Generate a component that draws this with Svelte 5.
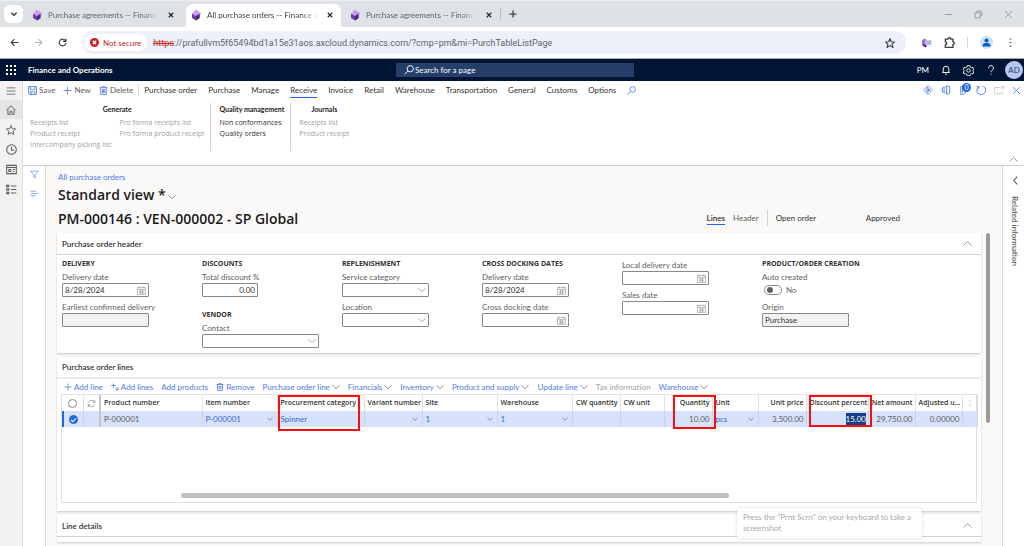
<script>
  // stroke icons on a 16x16 grid
  const icons = {
    down: 'M1 4.500l7 7 7-7',
    up: 'M1 11.500l7-7 7 7',
    left: 'M11 1L5 8l6 7',
    close: 'M2 2l12 12M14 2L2 14',
    plus: 'M8 1v14M1 8h14',
    minimize: 'M2 8h12',
    restore: 'M2 5h9v9H2zM5 5V4a2 2 0 0 1 2-2h5a2 2 0 0 1 2 2v5a2 2 0 0 1-2 2h-1',
    back: 'M15 8H2M8 2L2 8l6 6',
    forward: 'M1 8h13M8 2l6 6-6 6',
    reload: 'M13.500 5.500A6 6 0 1 0 14 9M14 1v5H9',
    star: 'M8 1l2.100 4.900 5.300.4-4 3.500 1.200 5.200L8 12.200 3.400 15l1.200-5.200-4-3.500 5.300-.4z',
    puzzle: 'M2 3h4a2 2 0 0 1 4 0h3v4a2 2 0 0 1 0 4v4H2v-4a2 2 0 0 0 0-4z',
    search: 'M10 1a5 5 0 1 1 0 10 5 5 0 0 1 0-10M6.300 9.500L1 15',
    bell: 'M2 12h12M3.500 12V6.500a4.500 4.500 0 0 1 9 0V12M6.500 14.500h3',
    gear: 'M6 1h4l.5 2 2 1 2-.5 1 3.500-1.500 1.500L15.500 10l-1 3-2-.5-2 1-.5 2H6l-.5-2-2-1-2 .5-1-3L2 8.500.500 7l1-3.500 2 .5 2-1zM8 5.500a2.500 2.500 0 1 0 0 5 2.500 2.500 0 0 0 0-5',
    help: 'M4 5a4 4 0 1 1 6 3.500c-1.500 1-2 1.500-2 3M8 14v1.500',
    menu: 'M1 3h14M1 8h14M1 13h14',
    home: 'M1 8l7-6.500L15 8M3 6.500V15h3.500v-5h3v5H13V6.500',
    clock: 'M8 1a7 7 0 1 0 0 14A7 7 0 0 0 8 1M8 4v5h4',
    workspace: 'M1 2h14v12H1zM1 5h14M4 8h3v3H4zM10 8h3M10 11h2',
    modules: 'M1 2h3v2H1zM1 7h3v2H1zM1 12h3v2H1zM7 3h8M7 8h8M7 13h8',
    save: 'M1 1h14v14H3l-2-2zM4 1v5h8V1M4 15v-5h8v5M6.500 12v3',
    trash: 'M1 3h14M5.500 3V1h5v2M3 3v12h10V3M6 5.500v7M8 5.500v7M10 5.500v7',
    funnel: 'M1 2h14l-5.500 6v6l-3-2V8z',
    lines: 'M1 4h9M1 8h14M1 12h9',
    calendar: 'M1 2.500h14V15H1zM1 6h14M4 1v3M12 1v3M4 9h8M4 12h8M6 7v7M10 7v7',
    addlines: 'M5 1v9M0 5h10M9 12h7M12 8v8',
    attach: 'M8 1l7 7-7 7-7-7zM6 3l5 5-5 5M11 8L6 6v4z',
    office: 'M7 3L2 5v6l5 2M5 5v6M9 1l5 2v10l-5 2z',
    clip: 'M3 1h8v11l-3 3H3zM6 4v8',
    refresh: 'M4.500 2.500A7 7 0 1 0 11.500 2M4.500 6V2.500H1',
    popout: 'M9 4H1v10h12V9M10 2h5v5M15 2l-4 4',
    sync: 'M2 6.500A6.500 6.500 0 0 1 14 6M14 9.500A6.500 6.500 0 0 1 2 10M14 2v4h-4M2 14v-4h4',
    more: 'M8 2v1.500M8 7.300v1.500M8 12.500v1.500'
  };

  const tabs = [
    { title: 'Purchase agreements -- Financ' },
    { title: 'All purchase orders -- Finance a', active: true },
    { title: 'Purchase agreements -- Financ' }
  ];

  const menus = [
    'Purchase order', 'Purchase', 'Manage', 'Receive', 'Invoice', 'Retail',
    'Warehouse', 'Transportation', 'General', 'Customs', 'Options'
  ];

  const groups = [
    {
      title: 'Generate',
      disabled: true,
      columns: [
        ['Receipts list', 'Product receipt', 'Intercompany picking list'],
        ['Pro forma receipts list', 'Pro forma product receipt']
      ]
    },
    { title: 'Quality management', columns: [['Non conformances', 'Quality orders']] },
    { title: 'Journals', disabled: true, columns: [['Receipts list', 'Product receipt']] }
  ];

  const lineActions = [
    { label: 'Add line', icon: 'plus' },
    { label: 'Add lines', icon: 'addlines' },
    { label: 'Add products' },
    { label: 'Remove', icon: 'trash' },
    { label: 'Purchase order line', menu: true },
    { label: 'Financials', menu: true },
    { label: 'Inventory', menu: true },
    { label: 'Product and supply', menu: true },
    { label: 'Update line', menu: true },
    { label: 'Tax information', disabled: true },
    { label: 'Warehouse', menu: true }
  ];

  const columns = [
    { label: 'Product number', value: 'P-000001', width: 102, plain: true },
    { label: 'Item number', value: 'P-000001', width: 75, lookup: true },
    { label: 'Procurement category', value: 'Spinner', width: 87, mark: 'category' },
    { label: 'Variant number', value: '', width: 58, lookup: true },
    { label: 'Site', value: '1', width: 75, lookup: true },
    { label: 'Warehouse', value: '1', width: 75, lookup: true },
    { label: 'CW quantity', value: '', width: 48, right: true },
    { label: 'CW unit', value: '', width: 44 },
    { label: 'Quantity', value: '10.00', width: 48, right: true, mark: 'quantity' },
    { label: 'Unit', value: 'pcs', width: 46, lookup: true },
    { label: 'Unit price', value: '3,500.00', width: 48, right: true },
    { label: 'Discount percent', value: '15.00', width: 62, right: true, edit: true, mark: 'discount' },
    { label: 'Net amount', value: '29,750.00', width: 47, right: true },
    { label: 'Adjusted u...', value: '0.00000', width: 47, right: true }
  ];

  let activeMenu = $state('Receive');
  let autoCreated = $state(false);
  let selected = $state(true);
</script>

{#snippet icon(name, size = 10, stroke = 1.5)}
  <svg class="icon" width={size} height={size} viewBox="0 0 16 16" stroke-width={stroke} aria-hidden="true">
    <path d={icons[name]} />
  </svg>
{/snippet}

{#snippet favicon()}
  <svg width="11" height="12" viewBox="0 0 22 24" aria-hidden="true">
    <path d="M9 1l8 5-7 9-8-5z" fill="#e3a7f5" />
    <path d="M9 1l12 8-7 5-8-5z" fill="#c99af0" />
    <path d="M2 9l8 5 7-4v8l-7 5-8-5z" fill="#6b3fa8" />
    <path d="M10 14l7-4v8l-7 5z" fill="#4b2a86" />
  </svg>
{/snippet}

{#snippet dateField(id, label, value = '')}
  <div class="field">
    <label for={id}>{label}</label>
    <div class="box">
      <input {id} type="text" {value} />
      {@render icon('calendar', 9, 1)}
    </div>
  </div>
{/snippet}

{#snippet selectField(id, label, wide = false)}
  <div class="field">
    <label for={id}>{label}</label>
    <div class="box" class:wide>
      <select {id}><option value=""></option></select>
      {@render icon('down', 8)}
    </div>
  </div>
{/snippet}

<div class="window">
  <div class="tabstrip">
    <button class="tab-search" aria-label="Search tabs">{@render icon('down', 6, 3.5)}</button>
    {#each tabs as tab}
      <div class="tab" class:active={tab.active}>
        {@render favicon()}
        <button class="tab-title">{tab.title}</button>
        <button class="tab-close" aria-label="Close tab">{@render icon('close', 6, 3)}</button>
      </div>
    {/each}
    <button class="new-tab" aria-label="New tab">{@render icon('plus', 8, 2.5)}</button>
    <div class="window-controls">
      <button aria-label="Minimize">{@render icon('minimize', 9)}</button>
      <button aria-label="Restore">{@render icon('restore', 9)}</button>
      <button aria-label="Close">{@render icon('close', 9)}</button>
    </div>
  </div>

  <div class="browser-bar">
    <button aria-label="Back">{@render icon('back', 9, 2)}</button>
    <button class="faded" aria-label="Forward">{@render icon('forward', 9, 2)}</button>
    <button aria-label="Reload">{@render icon('reload', 9, 2)}</button>
    <div class="address">
      <button class="insecure">
        <svg width="9" height="9" viewBox="0 0 16 16" aria-hidden="true">
          <circle cx="8" cy="8" r="8" fill="#c5221f" />
          <path d="M5 5l6 6M11 5l-6 6" stroke="#fff" stroke-width="2.5" />
        </svg>
        Not secure
      </button>
      <div class="url">
        <span class="scheme">https</span>
        <input
          type="text"
          aria-label="Address"
          value="://prafullvm5f65494bd1a15e31aos.axcloud.dynamics.com/?cmp=pm&mi=PurchTableListPage"
        />
      </div>
      <button aria-label="Bookmark">{@render icon('star', 10, 1.8)}</button>
    </div>
    <div class="browser-tools">
      <button aria-label="Extension">
        <svg width="11" height="11" viewBox="0 0 22 22" aria-hidden="true">
          <path d="M6 3l6 3-4 5 5 4-3 5-8-5V7z" fill="#9a6bd0" />
          <path d="M3 14l9 4-3 3-6-4z" fill="#4b2a86" />
          <path d="M9 6h12v11H11z" fill="#c9d3e6" />
          <path d="M11 9h9M12 13h8" stroke="#8796b5" stroke-width="1.5" />
        </svg>
      </button>
      <button aria-label="Extensions">{@render icon('puzzle', 11, 2)}</button>
      <span class="bar-divider"></span>
      <button class="profile" aria-label="Profile">
        <svg width="9" height="9" viewBox="0 0 16 16" aria-hidden="true">
          <circle cx="8" cy="4.500" r="3.500" fill="#0b57d0" />
          <path d="M1 15v-2c0-3 4-4 7-4s7 1 7 4v2z" fill="#0b57d0" />
        </svg>
      </button>
      <button aria-label="Browser menu">{@render icon('more', 11, 2.5)}</button>
    </div>
  </div>

  <header class="navbar">
    <div class="brand">
      <button aria-label="Apps">
        <svg width="10" height="10" viewBox="0 0 10 10" fill="#fff" aria-hidden="true">
          {#each [0, 4, 8] as y}
            {#each [0, 4, 8] as x}
              <rect {x} {y} width="2" height="2" />
            {/each}
          {/each}
        </svg>
      </button>
      <strong>Finance and Operations</strong>
    </div>
    <div class="page-search">
      {@render icon('search', 10)}
      <input type="search" aria-label="Search for a page" placeholder="Search for a page" />
    </div>
    <div class="nav-tools">
      <button>PM</button>
      <button aria-label="Notifications">{@render icon('bell', 10)}</button>
      <button aria-label="Settings">{@render icon('gear', 11, 1.3)}</button>
      <button aria-label="Help">{@render icon('help', 10)}</button>
      <button class="avatar">AD</button>
    </div>
  </header>

  <div class="shell">
    <nav class="rail">
      <button aria-label="Expand">{@render icon('menu', 10, 1.3)}</button>
      <ul>
        <li class="current"><a href="#home" aria-label="Home">{@render icon('home', 10)}</a></li>
        <li><a href="#favorites" aria-label="Favorites">{@render icon('star', 10)}</a></li>
        <li><a href="#recent" aria-label="Recent">{@render icon('clock', 11)}</a></li>
        <li><a href="#workspaces" aria-label="Workspaces">{@render icon('workspace', 11)}</a></li>
        <li><a href="#modules" aria-label="Modules">{@render icon('modules', 11)}</a></li>
      </ul>
    </nav>

    <div class="workspace">
      <section class="action-pane">
        <div class="menu-row">
          <div class="commands">
            <button>{@render icon('save', 9)}Save</button>
            <button>{@render icon('plus', 9)}New</button>
            <button>{@render icon('trash', 9)}Delete</button>
          </div>
          <div class="menus">
            {#each menus as menu}
              <button class:active={menu === activeMenu} onclick={() => (activeMenu = menu)}>{menu}</button>
            {/each}
            <button class="blue" aria-label="Search actions">{@render icon('search', 9)}</button>
          </div>
          <div class="page-tools">
            <button aria-label="Power Apps">{@render icon('attach', 10, 1.3)}</button>
            <button aria-label="Office">{@render icon('office', 10)}</button>
            <button class="attachments" aria-label="Attachments">
              {@render icon('clip', 9)}
              <span class="badge">0</span>
            </button>
            <button aria-label="Refresh">{@render icon('refresh', 10)}</button>
            <button class="faded" aria-label="Open in new window">{@render icon('popout', 10, 1.3)}</button>
            <button aria-label="Close page">{@render icon('close', 9)}</button>
          </div>
        </div>
        <div class="groups">
          {#each groups as group}
            <div class="group">
              <h2>{group.title}</h2>
              <div class="group-columns">
                {#each group.columns as items}
                  <ul>
                    {#each items as item}
                      <li><button disabled={group.disabled}>{item}</button></li>
                    {/each}
                  </ul>
                {/each}
              </div>
            </div>
          {/each}
        </div>
        <button class="collapse" aria-label="Collapse">{@render icon('up', 9)}</button>
      </section>

      <div class="body">
        <div class="filter-rail">
          <button aria-label="Filter">{@render icon('funnel', 9)}</button>
          <button aria-label="List">{@render icon('lines', 9)}</button>
        </div>

        <main>
          <div class="content">
            <div class="page-header">
              <div class="titles">
                <a href="#orders">All purchase orders</a>
                <button class="view">Standard view * {@render icon('down', 8)}</button>
                <h1>PM-000146 : VEN-000002 - SP Global</h1>
              </div>
              <div class="status">
                <button class="switch active">Lines</button>
                <button class="switch">Header</button>
                <span class="state">Open order</span>
                <span class="approval">Approved</span>
              </div>
            </div>

            <section class="card">
              <div class="card-head">
                <h2>Purchase order header</h2>
                <button aria-label="Collapse section">{@render icon('up', 9)}</button>
              </div>
              <div class="fields">
                <div>
                  <h3>Delivery</h3>
                  {@render dateField('delivery', 'Delivery date', '8/28/2024')}
                  <div class="field">
                    <label for="confirmed">Earliest confirmed delivery</label>
                    <div class="box locked"><input id="confirmed" type="text" readonly /></div>
                  </div>
                </div>
                <div>
                  <h3>Discounts</h3>
                  <div class="field">
                    <label for="discount">Total discount %</label>
                    <div class="box narrow"><input id="discount" class="number" type="text" value="0.00" /></div>
                  </div>
                  <h3 class="second">Vendor</h3>
                  {@render selectField('contact', 'Contact', true)}
                </div>
                <div>
                  <h3>Replenishment</h3>
                  {@render selectField('service', 'Service category')}
                  {@render selectField('location', 'Location')}
                </div>
                <div>
                  <h3>Cross docking dates</h3>
                  {@render dateField('dock-delivery', 'Delivery date', '8/28/2024')}
                  {@render dateField('dock-date', 'Cross docking date')}
                </div>
                <div class="untitled">
                  {@render dateField('local-date', 'Local delivery date')}
                  {@render dateField('sales-date', 'Sales date')}
                </div>
                <div>
                  <h3>Product/order creation</h3>
                  <div class="field">
                    <label for="auto">Auto created</label>
                    <div class="toggle">
                      <input id="auto" type="checkbox" bind:checked={autoCreated} />
                      <span>{autoCreated ? 'Yes' : 'No'}</span>
                    </div>
                  </div>
                  <div class="field">
                    <label for="origin">Origin</label>
                    <div class="box locked"><input id="origin" type="text" value="Purchase" readonly /></div>
                  </div>
                </div>
              </div>
            </section>

            <section class="card">
              <div class="card-head thick"><h2>Purchase order lines</h2></div>
              <div class="line-actions">
                {#each lineActions as action}
                  <button disabled={action.disabled}>
                    {#if action.icon}{@render icon(action.icon, 8)}{/if}
                    {action.label}
                    {#if action.menu}<span class="caret">{@render icon('down', 8)}</span>{/if}
                  </button>
                {/each}
              </div>
              <div class="grid">
                <table>
                  <colgroup>
                    <col style:width="20px" />
                    <col style:width="17px" />
                    {#each columns as column}
                      <col style:width="{column.width}px" />
                    {/each}
                    <col style:width="15px" />
                  </colgroup>
                  <thead>
                    <tr>
                      <th class="pick"><input type="checkbox" aria-label="Select all" /></th>
                      <th class="pick frozen">{@render icon('sync', 9, 1.3)}</th>
                      {#each columns as column}
                        <th class:right={column.right}>
                          {column.label}
                          {#if column.mark}<span class="mark {column.mark}"></span>{/if}
                        </th>
                      {/each}
                      <th class="pick">{@render icon('more', 8, 2)}</th>
                    </tr>
                  </thead>
                  <tbody>
                    <tr>
                      <td class="pick first">
                        <input type="checkbox" aria-label="Select row" bind:checked={selected} />
                      </td>
                      <td class="frozen"></td>
                      {#each columns as column}
                        <td class:right={column.right} class:plain={column.plain || column.right}>
                          {#if column.edit}
                            <input class="edit" type="text" aria-label={column.label} value={column.value} />
                          {:else if column.lookup}
                            <div class="lookup"><span>{column.value}</span>{@render icon('down', 6, 2)}</div>
                          {:else}
                            {column.value}
                          {/if}
                        </td>
                      {/each}
                      <td></td>
                    </tr>
                  </tbody>
                </table>
                <div class="scroll-x"></div>
              </div>
            </section>

            <section class="card last">
              <div class="card-head">
                <h2>Line details</h2>
                <button aria-label="Expand section">{@render icon('up', 9)}</button>
              </div>
              <div class="toast">Press the "Prnt Scrn" on your keyboard to take a screenshot</div>
            </section>
          </div>
          <div class="scroll-y"></div>
        </main>

        <aside>
          <button aria-label="Open related information">{@render icon('left', 9, 2)}</button>
          <span>Related information</span>
        </aside>
      </div>
    </div>
  </div>
</div>

<style>
  :global(body) {
    margin: 0;
    background: #fff;
  }

  .window {
    display: flex;
    flex-direction: column;
    min-height: 100vh;
    box-sizing: border-box;
    border-bottom: 1px solid #d2d4d8;
    font: 8px/12px Lato, 'Noto Sans', sans-serif;
    color: #323130;
  }

  .window :global(*) {
    box-sizing: border-box;
  }

  button,
  input,
  select {
    font: inherit;
    color: inherit;
    border: 0;
    padding: 0;
    margin: 0;
    background: none;
    outline: 0;
    min-width: 0;
  }

  button {
    display: flex;
    align-items: center;
    white-space: nowrap;
  }

  select {
    appearance: none;
  }

  a {
    color: #4f7be0;
    text-decoration: none;
  }

  h1,
  h2,
  h3,
  ul {
    margin: 0;
    padding: 0;
    list-style: none;
    font-size: 8px;
    font-weight: 600;
  }

  .icon {
    flex: none;
    display: block;
    fill: none;
    stroke: currentColor;
  }

  /* browser chrome */
  .tabstrip {
    display: flex;
    align-items: center;
    height: 27px;
    padding-left: 4px;
    background: #dee1e6;
    border-top: 1px solid #eceef1;
  }

  .tab-search {
    justify-content: center;
    width: 19px;
    height: 18px;
    margin-right: 4px;
    border-radius: 6px;
    background: #fff;
  }

  .tab {
    display: flex;
    align-items: center;
    gap: 5px;
    align-self: flex-end;
    width: 155px;
    height: 23px;
    margin-right: 4px;
    padding: 0 8px 2px 5px;
    border-radius: 7px 7px 0 0;
    color: #5f6368;
  }

  .tab.active {
    background: #fff;
    color: #3c4043;
  }

  .tab-title {
    flex: 1;
    overflow: hidden;
    mask-image: linear-gradient(to right, #000 85%, transparent);
  }

  .tab-close {
    margin-left: 4px;
    color: #202124;
  }

  .new-tab {
    height: 12px;
    margin-left: -4px;
    padding-left: 8px;
    border-left: 1px solid #b9bcc1;
    color: #3c4043;
  }

  .window-controls {
    display: flex;
    gap: 21px;
    margin-left: auto;
    padding-right: 11px;
    color: #8d9095;
  }

  .browser-bar {
    display: flex;
    align-items: center;
    gap: 15px;
    height: 32px;
    padding: 0 8px 0 10px;
    border-bottom: 1px solid #a5a8ac;
    color: #3c4043;
  }

  .faded {
    color: #b8b8b8;
  }

  .address {
    flex: 1;
    display: flex;
    align-items: center;
    height: 23px;
    padding: 0 11px 0 2px;
    border-radius: 12px;
    background: #ecf0f9;
  }

  .insecure {
    gap: 4px;
    height: 17px;
    padding: 0 6px;
    border-radius: 9px;
    background: #fff;
    color: #c5221f;
  }

  .url {
    flex: 1;
    display: flex;
    padding-left: 6px;
    font-family: Roboto, 'Noto Sans', sans-serif;
    font-size: 9px;
    color: #5f6368;
  }

  .url input {
    flex: 1;
  }

  .scheme {
    color: #c5221f;
    text-decoration: line-through;
  }

  .browser-tools {
    display: flex;
    align-items: center;
    gap: 12px;
  }

  .bar-divider {
    width: 1px;
    height: 11px;
    background: #c8d9f4;
  }

  .profile {
    justify-content: center;
    width: 13px;
    height: 13px;
    border-radius: 50%;
    background: #cfe0fc;
  }

  /* application bar */
  .navbar {
    display: grid;
    grid-template-columns: 1fr 238px 1fr;
    align-items: center;
    height: 22px;
    padding-left: 6px;
    background: #001433;
    color: #fff;
  }

  .brand {
    display: flex;
    align-items: center;
    gap: 12px;
  }

  .brand strong {
    font-weight: 700;
  }

  .page-search {
    display: flex;
    align-items: center;
    gap: 1px;
    height: 14px;
    padding-left: 8px;
    background: #263f6a;
  }

  .page-search input {
    flex: 1;
  }

  .page-search input::placeholder {
    color: #fff;
    opacity: 1;
  }

  .nav-tools {
    display: flex;
    align-items: center;
    justify-content: flex-end;
    gap: 12px;
    padding-right: 1px;
  }

  .avatar {
    justify-content: center;
    width: 18px;
    height: 18px;
    margin-left: -3px;
    border-radius: 50%;
    background: #b5c7f2;
    color: #33415e;
  }

  .shell {
    flex: 1;
    display: flex;
  }

  .rail {
    width: 23px;
    border-right: 1px solid #dddcdb;
    background: #f3f2f1;
    color: #605e5c;
  }

  .rail > button,
  .rail a {
    display: flex;
    align-items: center;
    justify-content: center;
    width: 22px;
    height: 19px;
    color: inherit;
  }

  .rail ul {
    display: grid;
    gap: 1px;
  }

  .rail .current {
    background: #e6e5e4;
  }

  .workspace {
    flex: 1;
    min-width: 0;
    display: flex;
    flex-direction: column;
  }

  /* action pane */
  .action-pane {
    display: flex;
    flex-direction: column;
    height: 85px;
    border-bottom: 1px solid #d2d0ce;
  }

  .menu-row {
    display: flex;
    align-items: center;
    height: 18px;
    padding-left: 5px;
  }

  .commands {
    display: flex;
    gap: 8px;
    padding-right: 5px;
    border-right: 1px solid #e1dfdd;
    color: #605e5c;
  }

  .commands button {
    gap: 2px;
  }

  .commands .icon,
  .blue,
  .page-tools {
    color: #4f7be0;
  }

  .menus {
    display: flex;
    gap: 11px;
    padding-left: 5px;
  }

  .menus button {
    height: 16px;
    padding-top: 1px;
    border-bottom: 1px solid transparent;
  }

  .menus .active {
    border-color: #2266e3;
  }

  .page-tools {
    display: flex;
    align-items: center;
    gap: 8px;
    margin-left: auto;
    padding-right: 3px;
  }

  .page-tools .faded {
    color: #c8c6c4;
  }

  .attachments {
    position: relative;
  }

  .badge {
    position: absolute;
    top: -3px;
    left: 3px;
    width: 9px;
    height: 9px;
    border-radius: 50%;
    background: #2266e3;
    color: #fff;
    font-size: 7px;
    line-height: 9px;
    text-align: center;
  }

  .groups {
    display: flex;
    padding: 4px 0 0 7px;
  }

  .group {
    height: 48px;
  }

  .group h2 {
    margin-bottom: 2px;
    font-size: 7px;
    font-weight: 700;
    line-height: 12px;
    text-align: center;
    color: #1b1a19;
  }

  .group + .group {
    margin-left: 6px;
    padding-left: 8px;
    border-left: 1px solid #d2d0ce;
  }

  .group-columns {
    display: flex;
    gap: 8px;
  }

  .group button {
    height: 11px;
    font-family: 'Open Sans', 'Noto Sans', sans-serif;
    font-size: 7px;
    font-weight: 400;
  }

  .group button:disabled {
    color: #a19f9d;
  }

  .collapse {
    margin: auto 6px 1px auto;
    color: #8a8886;
  }

  .body {
    flex: 1;
    display: flex;
  }

  .filter-rail {
    display: flex;
    flex-direction: column;
    align-items: center;
    gap: 10px;
    width: 23px;
    padding-top: 4px;
    border-right: 1px solid #dddcdb;
    color: #7b9ae6;
  }

  main {
    flex: 1;
    min-width: 0;
    display: flex;
    gap: 5px;
    padding: 5px 12px 4px 11px;
    background: #faf9f8;
  }

  .content {
    flex: 1;
    min-width: 0;
    display: flex;
    flex-direction: column;
    gap: 4px;
  }

  .scroll-y {
    width: 4px;
    height: 190px;
    margin-top: 62px;
    border-radius: 2px;
    background: #9b9a99;
  }

  .page-header {
    display: flex;
    justify-content: space-between;
    align-items: flex-end;
    height: 58px;
    padding: 0 81px 0 1px;
  }

  .titles {
    align-self: flex-start;
  }

  .titles a {
    display: block;
  }

  .view,
  h1 {
    font-family: 'Open Sans', 'Noto Sans', sans-serif;
    font-size: 14px;
    font-weight: 600;
    line-height: 24px;
    color: #1b1a19;
  }

  .view {
    gap: 2px;
  }

  .view .icon {
    margin-top: 4px;
    color: #605e5c;
  }

  .status {
    display: flex;
    align-items: center;
    padding-bottom: 3px;
  }

  .switch {
    margin-right: 8px;
    border-bottom: 1px solid transparent;
    color: #605e5c;
  }

  .switch.active {
    border-color: #2266e3;
    color: #323130;
    font-weight: 600;
  }

  .state {
    width: 99px;
    padding: 2px 0 2px 8px;
    border-left: 1px solid #d2d0ce;
  }

  .card {
    position: relative;
    background: #fff;
    box-shadow: 0 1px 2px rgba(0, 0, 0, 0.2);
  }

  .card-head {
    display: flex;
    align-items: center;
    justify-content: space-between;
    height: 22px;
    padding: 0 9px 0 5px;
    border-bottom: 1px solid #d2d0ce;
  }

  .card-head.thick {
    border-bottom: 2px solid #edebe9;
  }

  .card-head button {
    color: #8a8886;
  }

  .last {
    padding-bottom: 5px;
  }

  /* order header form */
  .fields {
    display: grid;
    grid-template-columns: repeat(6, 140px);
    height: 98px;
    padding: 3px 5px 0;
  }

  h3,
  th {
    font-family: 'Open Sans', 'Noto Sans', sans-serif;
    font-size: 7px;
  }

  h3 {
    margin-bottom: 1px;
    font-weight: 700;
    text-transform: uppercase;
    white-space: nowrap;
  }

  h3.second {
    margin-top: 12px;
  }

  .untitled {
    padding-top: 1px;
  }

  .field {
    margin-bottom: 4px;
    color: #605e5c;
  }

  .field label {
    display: block;
    white-space: nowrap;
  }

  .box {
    display: flex;
    align-items: center;
    width: 87px;
    height: 14px;
    padding: 0 2px;
    border: 1px solid #8a8886;
    border-radius: 1px;
    color: #8a8886;
  }

  .box input,
  .box select {
    flex: 1;
    color: #323130;
  }

  .box.narrow {
    width: 56px;
  }

  .box.wide {
    width: 117px;
  }

  .box.locked {
    background: #f3f2f1;
  }

  .number {
    text-align: right;
  }

  .toggle {
    display: flex;
    align-items: center;
    gap: 4px;
    height: 14px;
    padding-left: 2px;
  }

  .toggle input {
    appearance: none;
    width: 18px;
    height: 10px;
    padding: 1px;
    border: 1px solid #8a8886;
    border-radius: 5px;
  }

  .toggle input::before {
    content: '';
    display: block;
    width: 6px;
    height: 6px;
    margin-left: 1px;
    border-radius: 50%;
    background: #605e5c;
  }

  .toggle input:checked::before {
    margin-left: 8px;
  }

  /* order lines */
  .line-actions {
    display: flex;
    gap: 8px;
    height: 15px;
    padding-left: 7px;
  }

  .line-actions button {
    gap: 2px;
    color: #4f7be0;
  }

  .line-actions button:disabled {
    color: #a19f9d;
  }

  .caret {
    color: #605e5c;
  }

  .grid {
    height: 109px;
    margin: 0 4px;
    border: 1px solid #e1dfdd;
  }

  .card:has(.grid) {
    padding-bottom: 8px;
  }

  table {
    width: 100%;
    table-layout: fixed;
    border-collapse: collapse;
  }

  th,
  td {
    position: relative;
    height: 16px;
    padding: 0 2px 0 3px;
    border-right: 1px solid #e1dfdd;
    text-align: left;
    white-space: nowrap;
  }

  th {
    font-weight: 600;
  }

  td {
    background: #d6e2fb;
    border-color: #c9d4ec;
    color: #3767c9;
  }

  td.plain {
    color: #605e5c;
  }

  .right {
    text-align: right;
  }

  .pick {
    padding: 0;
    color: #8a8886;
  }

  .pick .icon {
    margin: 0 auto;
  }

  .frozen {
    border-right: 2px solid #c8c6c4;
  }

  .first {
    border-left: 2px solid #2266e3;
  }

  .pick input {
    appearance: none;
    display: block;
    width: 9px;
    height: 9px;
    margin: 0 auto;
    border: 1px solid #8a8886;
    border-radius: 50%;
  }

  .pick input:checked {
    border-color: #2266e3;
    background: #2266e3;
  }

  .pick input:checked::before {
    content: '';
    display: block;
    width: 4px;
    height: 2px;
    margin: 2px 0 0 1px;
    border: solid #fff;
    border-width: 0 0 1px 1px;
    transform: rotate(-45deg);
  }

  .lookup {
    display: flex;
    align-items: center;
    justify-content: space-between;
    padding-right: 2px;
  }

  .lookup .icon {
    color: #797775;
  }

  .edit {
    width: 20px;
    background: #163f86;
    color: #fff;
  }

  .mark {
    position: absolute;
    z-index: 1;
    top: 0;
    right: 4px;
    left: 0;
    height: 36px;
    border: 2px solid #ff0a10;
  }

  .mark.quantity {
    right: -4px;
    left: 8px;
    height: 34px;
  }

  .mark.discount {
    right: -4px;
    left: 2px;
    height: 32px;
  }

  .scroll-x {
    width: 60%;
    height: 5px;
    margin: 66px 0 0 13%;
    border-radius: 3px;
    background: #c1c1c1;
  }

  .toast {
    position: absolute;
    top: -7px;
    right: 59px;
    width: 185px;
    padding: 4px 6px;
    background: rgba(255, 255, 255, 0.85);
    box-shadow: 0 0 3px rgba(0, 0, 0, 0.15);
    line-height: 11px;
    color: #a8a8a8;
  }

  aside {
    display: flex;
    flex-direction: column;
    align-items: center;
    gap: 11px;
    width: 22px;
    padding: 10px 0 0 3px;
    border-left: 1px solid #dddcdb;
    color: #605e5c;
  }

  aside span {
    writing-mode: vertical-rl;
    font-weight: 600;
  }
</style>
